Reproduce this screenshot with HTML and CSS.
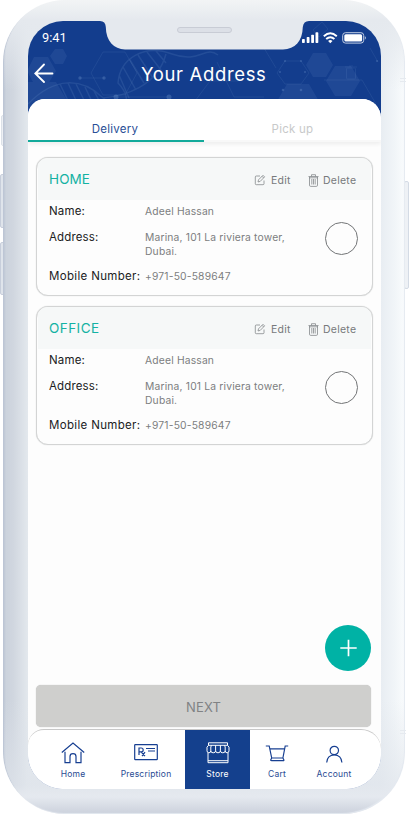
FILE: index.html
```html
<!DOCTYPE html>
<html lang="en">
<head>
<meta charset="utf-8">
<title>Your Address</title>
<link rel="stylesheet" href="styles.css">
</head>
<body>
<svg class="defs" width="0" height="0" aria-hidden="true">
  <symbol id="edit" viewBox="0 0 12 12"><path d="M6 2H2.300Q1.300 2 1.300 3v6.700q0 1 1 1H9q1 0 1-1V6.500M4 8l.5-2.200L9 1.300l1.600 1.600-4.400 4.500zM8 2.300l1.600 1.600"/></symbol>
  <symbol id="trash" viewBox="0 0 11 13"><path d="M.5 2.500h10M3.500 2.400V.7h4v1.700M1.500 3v8.200q0 1.200 1.200 1.200h5.600q1.200 0 1.200-1.200V3M1 3.800h9M3.800 5v5.500M5.500 5v5.500M7.200 5v5.500"/></symbol>
</svg>
<div class="device">
  <i class="key key-mute"></i><i class="key key-up"></i><i class="key key-down"></i><i class="key key-power"></i>
  <div class="body"></div>
  <i class="band band-top"></i><i class="band band-bottom"></i>
  <svg class="notch" width="209" height="30" viewBox="0 0 209 30"><path d="M0 1Q5.500 1 5.800 7C6 21 14 29.400 25 29.400H183C195 29.400 202.500 21 202.800 7Q203.500 1 209 1V0H0z"/></svg>
  <div class="speaker-slot"></div>
  <main class="screen">
    <header class="header">
      <svg class="pattern" width="353" height="92" viewBox="28 21 353 92">
        <g class="fill"><path d="M34 57h14l8 14-8 13H34l-7-13zM55 49h8l4 7-4 8h-8l-5-8zM313 53h13l7 12-7 12h-13l-7-12zM335 66h16l9 15-9 15h-16l-9-15zM287 84h22l11 19-6 10h-32l-6-10zM28 82h28l12 20-6 11H28z"/></g>
        <g class="line"><path d="M103 52h22l12 21-12 22h-22l-12-22zM285 61h16l8 12-8 11h-16l-8-11zM217 62l17 35h30M264 48l12 20M80 78h24M116 97h52M324 80h38l14 24M370 48l8 14M186 113l24-32h28M313 30l9-8 6 7-9 8z"/></g>
        <g class="helix"><path d="M28 104C55 76 82 78 102 97S136 102 118 83C120 58 144 44 172 54S205 45 218 55M28 112C54 92 76 100 87 113M60 84l12 25M68 83l13 28M76 84l12 24M85 87l10 21M94 91l8 15M119 75l10 23M123 67l13 23M130 60l14 23M138 55l15 23M147 52l14 18M156 51l10 12M103 98C124 96 157 87 166 54"/></g>
        <g class="dot"><circle cx="80" cy="78" r="1.700"/><circle cx="104" cy="78" r="1.700"/><circle cx="116" cy="97" r="2.500"/><circle cx="169" cy="97" r="2.500"/><circle cx="280" cy="72" r="1"/><circle cx="305" cy="72" r="1"/><circle cx="285" cy="61" r="1"/><circle cx="301" cy="61" r="1"/><circle cx="283" cy="90" r="1.300"/><circle cx="301" cy="90" r="1.300"/><circle cx="377" cy="61" r="1"/></g>
        <g class="line"><rect x="346.500" y="68" width="9" height="11" rx="1"/><path d="M345 67h12M349 66h4"/></g>
      </svg>
      <div class="status">
        <span class="time">9:41</span>
        <svg width="65" height="12" viewBox="0 0 65 12">
          <g fill="#fff"><rect x="0" y="7" width="2.800" height="4" rx=".7"/><rect x="4.700" y="5" width="2.800" height="6" rx=".7"/><rect x="9.200" y="2.700" width="2.800" height="8.300" rx=".7"/><rect x="13.500" y=".3" width="2.800" height="10.700" rx=".7"/><path d="M28.300 11.200l-2.200-2.300q2.200-1.600 4.400 0z"/></g>
          <path d="M21.800 4.200q6.500-6 13 0M24.200 7q4.100-3.700 8.200 0" fill="none" stroke="#fff" stroke-width="1.900"/>
          <rect x="40.700" y=".7" width="21" height="10.400" rx="2.800" fill="none" stroke="#c2cee4"/><rect x="42.300" y="2.200" width="17.800" height="7.400" rx="1.500" fill="#fff"/><path d="M62.800 4q2.200 1.800 0 3.700z" fill="#c2cee4"/>
        </svg>
      </div>
      <div class="titlebar">
        <svg class="back" width="20" height="20" viewBox="0 0 20 20"><path d="M10 1.500L1.300 10.500l8.700 8.500M1.500 10.500H18.500"/></svg>
        <h1>Your Address</h1>
      </div>
    </header>
    <section class="panel">
      <nav class="tabs"><span class="tab active"><b>Delivery</b></span><span class="tab"><b>Pick up</b></span></nav>
      <div class="cards">
        <article class="card">
          <header><h2 class="home">HOME</h2><span class="action edit"><svg width="12" height="12"><use href="#edit"/></svg><b>Edit</b></span><span class="action delete"><svg width="11" height="13"><use href="#trash"/></svg><b>Delete</b></span></header>
          <div class="details">
            <dl><dt>Name:</dt><dd>Adeel Hassan</dd><dt>Address:</dt><dd class="street">Marina, 101 La riviera tower,<br>Dubai.</dd><dt class="mobile">Mobile Number:</dt><dd>+971-50-589647</dd></dl>
            <span class="radio"></span>
          </div>
        </article>
        <article class="card">
          <header><h2 class="office">OFFICE</h2><span class="action edit"><svg width="12" height="12"><use href="#edit"/></svg><b>Edit</b></span><span class="action delete"><svg width="11" height="13"><use href="#trash"/></svg><b>Delete</b></span></header>
          <div class="details">
            <dl><dt>Name:</dt><dd>Adeel Hassan</dd><dt>Address:</dt><dd class="street">Marina, 101 La riviera tower,<br>Dubai.</dd><dt class="mobile">Mobile Number:</dt><dd>+971-50-589647</dd></dl>
            <span class="radio"></span>
          </div>
        </article>
      </div>
      <div class="fab"><svg width="18" height="18" viewBox="0 0 18 18"><path d="M9.500 .8v16.400M1.300 9h16.400"/></svg></div>
      <div class="next">NEXT</div>
      <nav class="bottom">
        <span class="item first"><svg width="24" height="22" viewBox="0 0 24 22"><path d="M.8 10.500L12 1l11.200 9.500M4 9.800v10.900h5v-6.200q0-2.800 3-2.800t3 2.800v6.200h5V9.800"/></svg><b>Home</b></span>
        <span class="item"><svg width="24" height="22" viewBox="0 0 24 22"><rect x=".7" y="2.700" width="22.600" height="15" rx=".6"/><path d="M5 13V6h2.200q2 0 2 1.900t-2 1.900H5M7 9.800l4 4.400M11 10.200l-3 4M12 6.500h9M14 9h7"/></svg><b>Prescription</b></span>
        <span class="item store"><svg width="24" height="22" viewBox="0 0 24 22"><path d="M2.500.8h19v2.500h-19zM2.500 3.300L1 5.200v3.600q0 2 1.900 2t1.900-2q0 2 2.400 2t2.400-2q0 2 2.400 2t2.400-2q0 2 2.400 2t2.400-2q0 2 1.900 2t1.900-2V5.200l-1.500-1.900M4.800 8.800V5l.7-1.700M9.600 8.800V3.300M14.400 8.800V3.300M19.200 8.800V5l-.7-1.700M2 10.800v9.900h20v-9.900M2 18.700h20"/></svg><b>Store</b></span>
        <span class="item"><svg width="24" height="22" viewBox="0 0 24 22"><path d="M.8 4h3.400l2.500 12h11.200l2.300-12h3M4.900 6.800h14.700M6.700 16l-.9 1.700q-.4 1 .8 1h11.600q1 0 .6-1l-.9-1.700"/></svg><b>Cart</b></span>
        <span class="item last"><svg width="24" height="22" viewBox="0 0 24 22"><circle cx="12.300" cy="8.500" r="4.200"/><path d="M4.700 20.500q.6-7.500 7.600-7.500t7.600 7.500"/></svg><b>Account</b></span>
      </nav>
    </section>
  </main>
</div>
</body>
</html>
```
FILE: styles.css
```css
* { box-sizing: border-box; }
body { margin: 0; background: #fff; font-family: Inter, "Liberation Sans", sans-serif; }
svg { display: block; fill: none; flex: none; }
.defs { position: absolute; }
b, h1, h2 { font-weight: 400; margin: 0; white-space: nowrap; }
.device { position: relative; width: 409px; height: 814px; padding: 21px 28px 25px; overflow: hidden; }
.body { position: absolute; left: 3px; top: 0; width: 402px; height: 814px; border-radius: 62px;
  background: linear-gradient(180deg, #f2f4f5 0, #e5e9ee 20px, #e5e9ee00 90px, #dfe4eb00 700px, #dfe4ebaa 785px, #e5e9ef 797px, #cbd1dc 814px), linear-gradient(90deg, #b9c2d2 0, #ccd3dd 3px, #d0d6df 10px, #e3e8ed 25px, #e8edf2 378px, #f1f5f8 392px, #fafcfd 402px);
  box-shadow: inset 5px 0 1px -4px #bdc6d5, inset -1px -1px 1px #e4e9f0; }
.key { position: absolute; width: 5px; border-radius: 2px; background: #dfe4eb; border: 1px solid #c7cedb; }
.key-mute { left: 1px; top: 115px; height: 31px; background: #edf0f4; border-color: #dce1e8; }
.key-up { left: 0; top: 174px; height: 54px; }
.key-down { left: 0; top: 242px; height: 53px; }
.key-power { right: 0; top: 181px; height: 108px; background: #eef1f5; border-color: #d4dbe5; }
.band { position: absolute; right: 3px; width: 6px; height: 4px; border: solid #e6eaef; border-width: 1px 0; }
.band-top { top: 78px; }
.band-bottom { top: 730px; }
.notch { position: absolute; z-index: 3; left: 100px; top: 20px; fill: #e5e9ee; }
.speaker-slot { position: absolute; z-index: 4; left: 177px; top: 27px; width: 55px; height: 6px; border: 1px solid #c8ccd5; border-radius: 3px; background: #dce0e7; }
.screen { position: relative; width: 353px; height: 768px; border-radius: 35px; overflow: hidden; background: #133d8d; display: flex; flex-direction: column; }
.header { position: relative; height: 78px; color: #fff; padding-top: 9px; }
.pattern { position: absolute; left: 0; top: 0; }
.fill { fill: #7ba0d4; opacity: .12; }
.line { stroke: #7ba0d4; opacity: .13; }
.helix { stroke: #7ba0d4; opacity: .16; stroke-width: 1.500; }
.dot { fill: #7ba0d4; opacity: .3; }
.status { position: relative; z-index: 5; height: 16px; display: flex; justify-content: space-between; align-items: center; padding: 0 14px; }
.time { font: 400 12.800px/16px Roboto, sans-serif; }
.titlebar { position: relative; height: 34px; margin-top: 10px; display: flex; align-items: center; padding-left: 6px; }
.back { stroke: #fff; stroke-width: 1.800; stroke-linecap: round; }
h1 { font-size: 18.500px; line-height: 34px; margin-left: 87px; letter-spacing: .65px; padding-top: 1px; }
.panel { position: relative; flex: 1; background: #fdfdfd; border-radius: 17px 19px 0 0; display: flex; flex-direction: column; }
.tabs { height: 43px; display: grid; grid-template-columns: 176px 177px; background: #fff; border-radius: 17px 19px 0 0; box-shadow: 0 2px 4px #0001; }
.tab { display: flex; justify-content: center; padding-top: 21px; font-size: 11.500px; line-height: 18px; letter-spacing: .25px; color: #c8c9ca; border-bottom: 2px solid #f8f8f8; }
.tab.active { color: #294e96; border-color: #13aa9b; padding-right: 2px; }
.cards { padding: 15px 8px 0; display: grid; gap: 10px; }
.card { height: 139px; border: 1px solid #d3d4d4; border-radius: 12px; padding: 0 1px; overflow: hidden; background: #fdfdfd; box-shadow: 0 0 1px #c8caca; }
.card header { height: 42px; padding: 0 0 1px 11px; display: flex; align-items: center; background: #f6f8f8; color: #77797b; }
h2 { width: 205px; font-size: 13.500px; color: #14b2a3; }
.home { letter-spacing: .1px; }
.office { letter-spacing: .45px; }
.action { display: flex; align-items: center; font-size: 10.500px; letter-spacing: .25px; padding-top: 3px; }
.action svg { stroke: #85898b; stroke-width: .8; }
.edit { width: 54px; gap: 5px; }
.delete { gap: 4px; }
.details { display: flex; padding: 2px 0 0 11px; }
dl { margin: 0; width: 276px; display: grid; grid-template-columns: 96px 1fr; grid-template-rows: 26px 39px 20px; line-height: 18px; white-space: nowrap; }
dt { font-size: 11.500px; color: #202122; letter-spacing: .15px; }
.mobile { letter-spacing: .33px; }
dd { margin: 0; font-size: 10.300px; color: #7c7e80; letter-spacing: .18px; }
.street { line-height: 13.500px; padding-top: 3px; }
.radio { width: 33px; height: 33px; margin-top: 20px; border: 1px solid #727476; border-radius: 50%; }
.fab { position: absolute; left: 297px; top: 526px; width: 46px; height: 46px; border-radius: 50%; background: #00b2a5; display: grid; place-items: center; }
.fab svg { stroke: #fff; stroke-width: 1.700; }
.next { margin: auto 10px 2px 8px; height: 42px; flex: none; border-radius: 5px; background: #cfcfcd; color: #808284; font-size: 13px; line-height: 44px; text-align: center; letter-spacing: .2px; box-shadow: 0 0 1px #b5b6b5; }
.bottom { height: 60px; flex: none; display: grid; grid-template-columns: 79px 78px 65px 54px 77px; border-top: 1px solid #c8c8c8; border-radius: 16px 20px 0 0; background: #fff; color: #294b93; }
.item { display: flex; flex-direction: column; align-items: center; padding-top: 12px; font-size: 8.500px; line-height: 12px; letter-spacing: .2px; }
.item svg { stroke: #173f91; stroke-width: 1.200; margin-bottom: 4px; }
.first { padding-left: 11px; }
.last { padding-right: 17px; }
.store { background: #14408d; color: #fff; }
.store svg { stroke: #fff; stroke-width: 1; }
```
